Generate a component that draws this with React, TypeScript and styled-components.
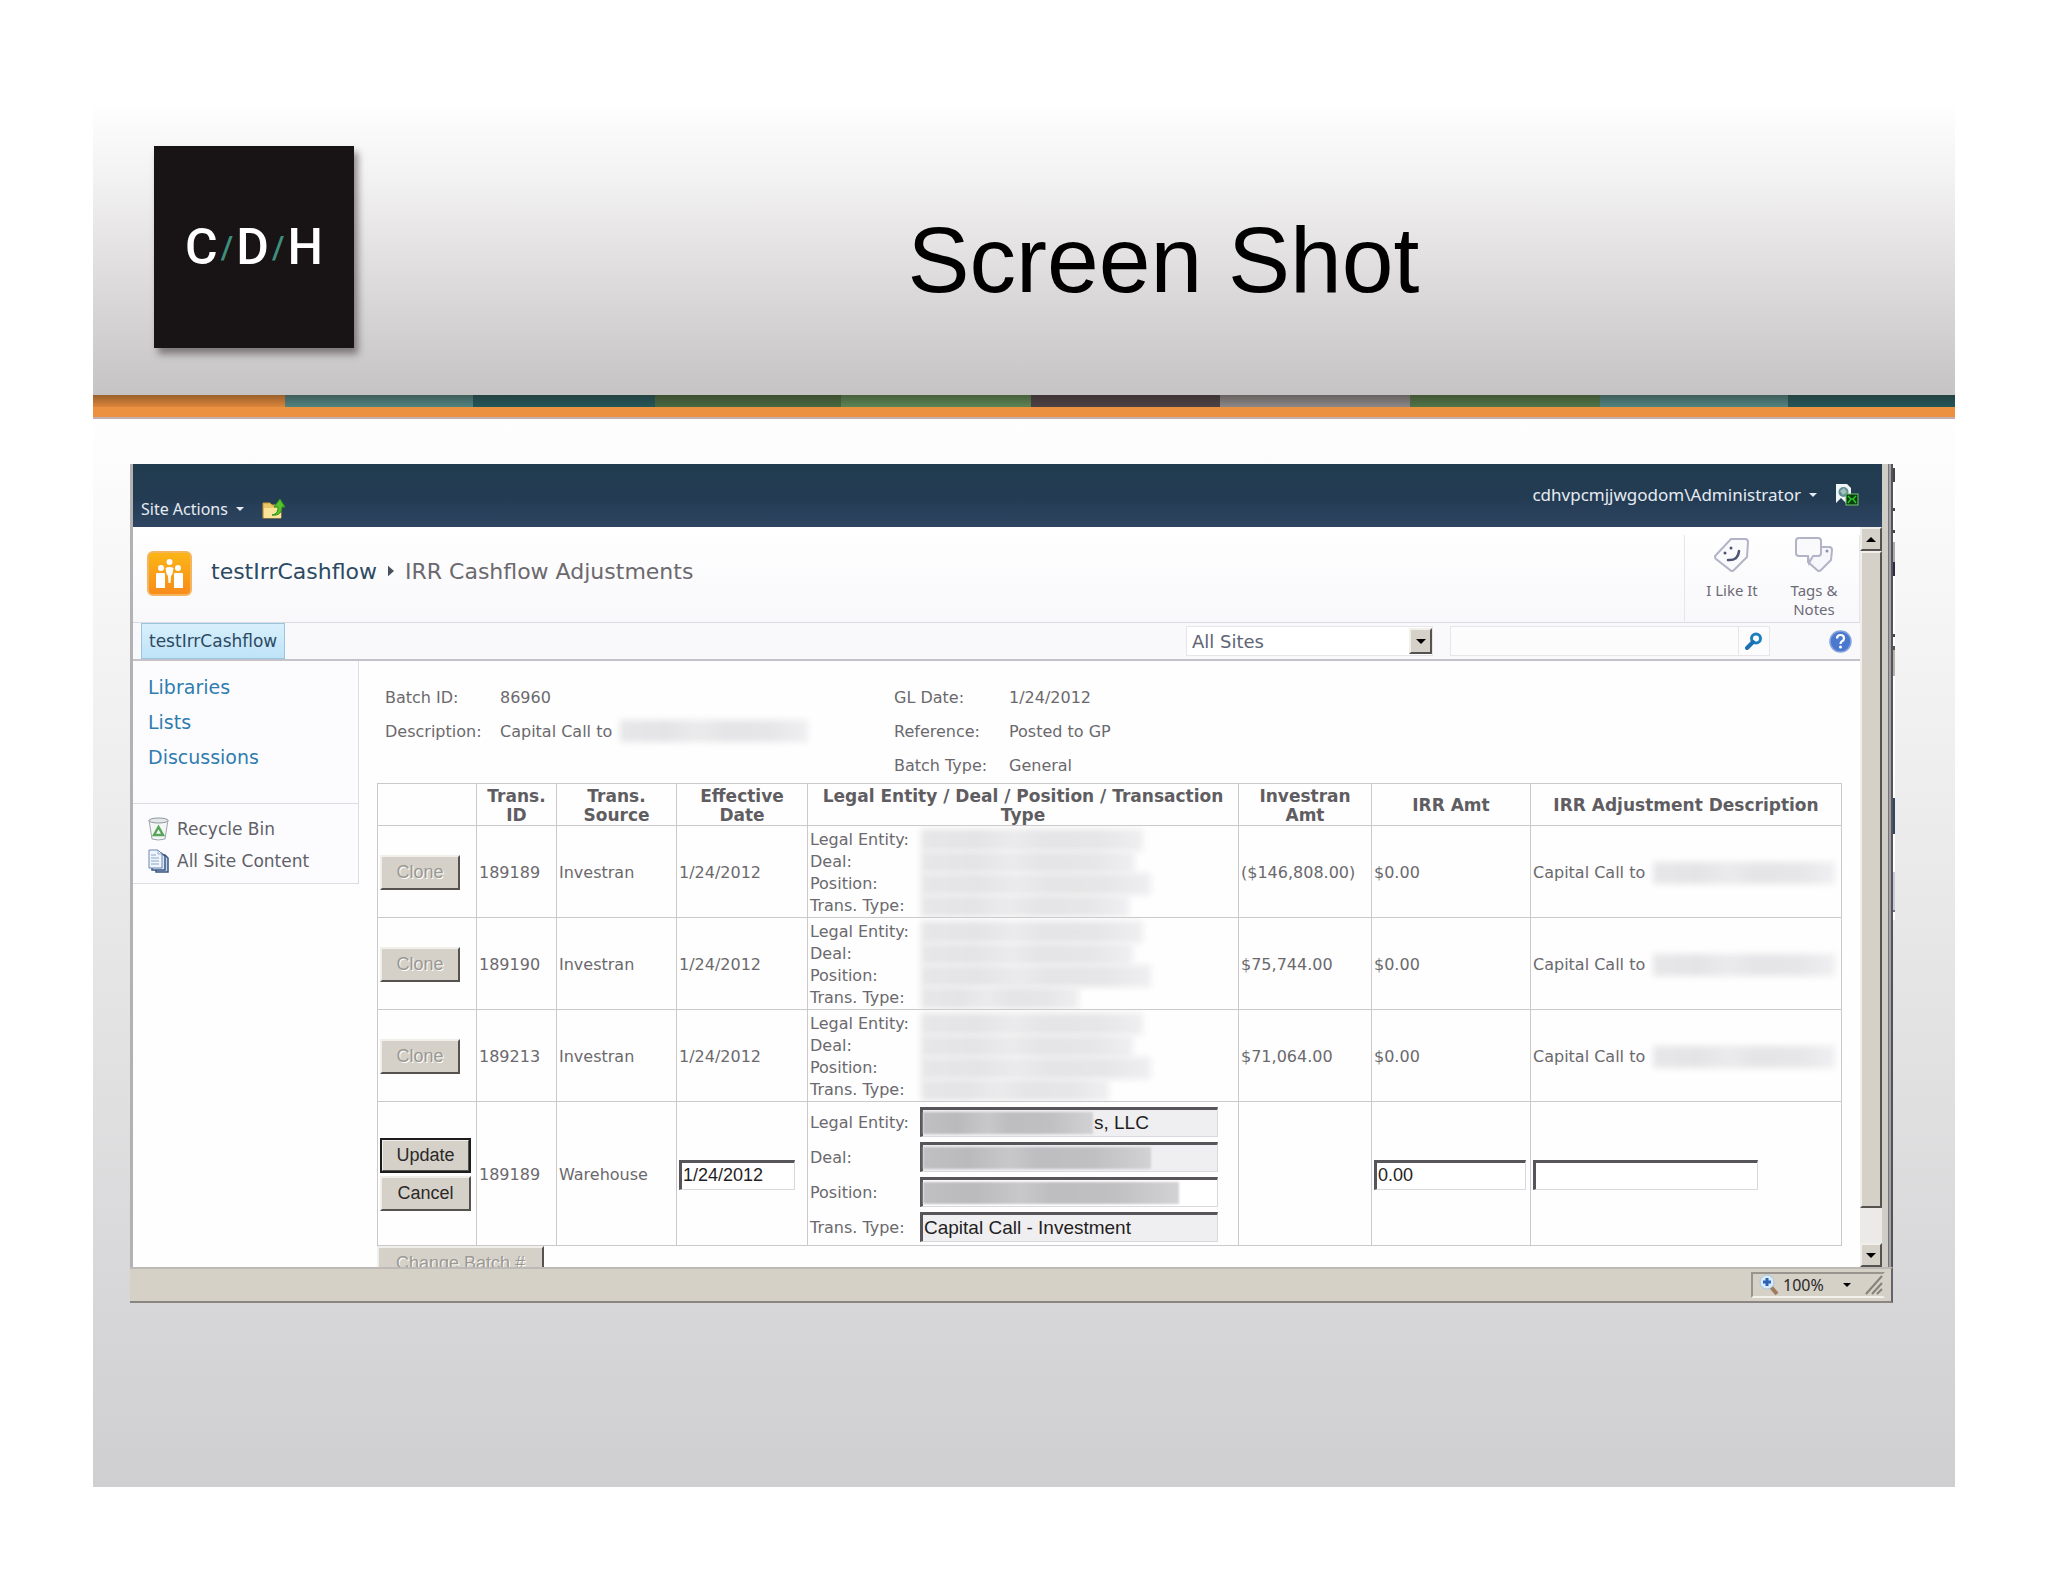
import React from 'react';
import styled, { createGlobalStyle, css } from 'styled-components';

const verdana = `'DejaVu Sans', Verdana, sans-serif`;
const segoe = `'Noto Sans', 'Segoe UI', sans-serif`;
const arial = `'Liberation Sans', Arial, sans-serif`;

const GlobalStyle = createGlobalStyle`
  * { box-sizing: border-box; }
  body { margin: 0; background: #fff; font-family: ${verdana}; color: #6b696d; }
  button, input, select { font: inherit; color: inherit; margin: 0; border-radius: 0; }
  a { text-decoration: none; color: inherit; }
`;

/* ---------- slide ---------- */

const Page = styled.div`
  padding: 100px 93px 95px;
`;

const SlideHeader = styled.header`
  display: flex;
  align-items: center;
  padding: 46px 0 47px 61px;
  background: linear-gradient(#ffffff, #f4f3f4 25%, #e3e1e2 52%, #c5c3c4);
`;

const Logo = styled.div`
  display: flex;
  align-items: center;
  justify-content: center;
  width: 200px;
  height: 202px;
  background: #181314;
  box-shadow: 4px 6px 7px rgba(60, 50, 55, 0.55);
  font: 500 50px Roboto, sans-serif;
  color: #fff;
`;

const Slash = styled.span`
  font-size: 32px;
  color: #3f8f7d;
  padding: 0 3px;
`;

const SlideTitle = styled.h1`
  flex: 1;
  margin: 0;
  padding: 26px 0 0 18px;
  text-align: center;
  font: 93px/104px ${arial};
  color: #000;
`;

const Stripes = styled.div`
  display: grid;
  grid-template-columns: 192fr 188fr 182fr 186fr 190fr 189fr 190fr 190fr 188fr 167fr;
  height: 12px;
`;

const Stripe = styled.span<{ $color: string }>`
  background: linear-gradient(rgba(40, 30, 20, 0.4), rgba(40, 30, 20, 0.05)) ${p => p.$color};
`;

const OrangeRule = styled.div`
  height: 12px;
  background: #ec913f;
  border-bottom: 2px solid #c3afb0;
`;

const SlideBody = styled.main`
  display: flex;
  align-items: flex-start;
  padding: 45px 60px 184px 37px;
  background: linear-gradient(#fefefe, #fafafa 8%, #cfced0);
`;

const BehindWindow = styled.span`
  width: 2px;
  height: 452px;
  margin-top: 4px;
  background: linear-gradient(
    #45434f 0 14px, #fff 14px 40px, #444 40px 43px, #fff 43px 62px, #444 62px 65px,
    #fff 65px 74px, #aaa 74px 94px, #2c2a4a 94px 108px, #fff 108px 166px, #444 166px 169px,
    #fff 169px 178px, #555 178px 182px, #b5b3aa 182px 208px, #fff 208px 330px,
    #2b4868 330px 366px, #fff 366px 404px, #c4ccdc 404px 442px, #777 442px 444px, #fff 444px
  );
`;

/* ---------- browser window ---------- */

const Window = styled.section`
  flex: 1;
  min-width: 0;
`;

const Frame = styled.div`
  border-left: 3px solid #b3b1b4;
  padding-right: 11px;
  background: linear-gradient(to left, #55525a 0 2px, #a5a2a3 2px 4px, #77737a 4px 5px, #d0cdc6 5px 11px, #fff 11px);
`;

const TopBar = styled.div`
  display: flex;
  justify-content: space-between;
  height: 63px;
  padding: 0 23px 0 8px;
  background: linear-gradient(#213b4f, #233c53 55%, #2f4563);
  color: #e6ebf2;
  font-family: ${segoe};
`;

const BarGroup = styled.div<{ $end?: boolean }>`
  display: flex;
  align-items: center;
  align-self: ${p => (p.$end ? 'flex-end' : 'flex-start')};
  height: 24px;
  margin: ${p => (p.$end ? '0 0 6px' : '19px 0 0')};
  gap: 18px;
`;

const MenuButton = styled.button<{ $size: number }>`
  display: flex;
  align-items: center;
  gap: 8px;
  padding: 0;
  border: 0;
  background: none;
  font-size: ${p => p.$size}px;
  line-height: 24px;
`;

const IconButton = styled.button`
  display: flex;
  padding: 0;
  border: 0;
  background: none;
`;

const Pane = styled.div`
  display: flex;
  height: 740px;
  background: #fefefe;
`;

const PaneContent = styled.div`
  flex: 1;
  min-width: 0;
  overflow: hidden;
`;

const TitleRow = styled.div`
  display: flex;
  height: 95px;
  padding-left: 14px;
  background: linear-gradient(#ffffff, #f8f8fb);
`;

const SiteIcon = styled.a`
  display: block;
  margin: 24px 19px 0 0;
`;

const Crumbs = styled.nav`
  display: flex;
  align-items: center;
  flex: 1;
  gap: 11px;
  height: 32px;
  margin-top: 28px;
  font-size: 22px;
  a { color: #2c4a63; }
`;

const Social = styled.div`
  display: flex;
  margin-top: 8px;
  padding: 0 4px 0 6px;
  border-left: 1px solid #e6e5ea;
  border-right: 1px solid #e6e5ea;
`;

const SocialButton = styled.button`
  display: flex;
  flex-direction: column;
  align-items: center;
  gap: 8px;
  width: 82px;
  padding: 2px 10px 0;
  border: 0;
  background: none;
  font: 15px/19px ${segoe};
  color: #6d6b78;
`;

const NavRow = styled.div`
  display: flex;
  align-items: center;
  height: 39px;
  padding: 0 8px;
  background: #f9f9fb;
  border-top: 1px solid #dcdbe0;
  border-bottom: 2px solid #c4c3c9;
`;

const Tab = styled.a`
  padding: 0 7px;
  border: 1px solid #9cc6de;
  background: linear-gradient(#d8f0fc, #bfe3f8);
  font-size: 17px;
  line-height: 34px;
  color: #2c4a63;
`;

const ScopeBox = styled.div`
  display: flex;
  width: 247px;
  height: 30px;
  margin-left: auto;
  background: #fff;
  border: 1px solid #e6e5ea;
  padding: 1px 0;
`;

const ScopeSelect = styled.select`
  appearance: none;
  flex: 1;
  min-width: 0;
  padding: 0 5px;
  border: 0;
  background: none;
  font-size: 18px;
  color: #5e6474;
`;

const classicEdge = css`
  border: 2px solid;
  border-color: #f1efea #55524f #55524f #f1efea;
  background: #d5d1c8;
`;

const SquareButton = styled.button`
  ${classicEdge}
  display: flex;
  align-items: center;
  justify-content: center;
  width: 22px;
  height: 24px;
  padding: 0;
`;

const ScopeArrow = styled.span`
  ${classicEdge}
  display: flex;
  align-items: center;
  justify-content: center;
  width: 23px;
  pointer-events: none;
`;

const SearchBox = styled.form`
  display: flex;
  width: 320px;
  height: 30px;
  margin: 0 59px 0 17px;
  border: 1px solid #e6e5ea;
  background: #fcfcfd;
`;

const SearchInput = styled.input`
  flex: 1;
  min-width: 0;
  border: 0;
  background: none;
`;

const SearchButton = styled.button`
  display: flex;
  align-items: center;
  justify-content: center;
  width: 31px;
  padding: 0;
  border: 0;
  border-left: 1px solid #e6e5ea;
  background: none;
`;

const Columns = styled.div`
  display: flex;
  align-items: flex-start;
`;

const Sidebar = styled.aside`
  flex: none;
  width: 226px;
  background: #fcfcfe;
  border: solid #dddce2;
  border-width: 0 1px 1px 0;
`;

const LinkList = styled.nav`
  display: flex;
  flex-direction: column;
  padding: 9px 15px 28px;
  font-size: 19px;
  line-height: 35px;
  color: #2f7cb0;
`;

const ToolList = styled.nav`
  display: flex;
  flex-direction: column;
  padding: 9px 15px 6px;
  border-top: 1px solid #dddce2;
  font-size: 17px;
  line-height: 32px;
  color: #5f6068;
  a { display: flex; align-items: center; gap: 8px; }
`;

const Content = styled.div`
  flex: 1;
  min-width: 0;
  padding: 19px 18px 0 18px;
  font-size: 16px;
`;

const Meta = styled.dl`
  display: grid;
  grid-template-columns: 115px 394px 115px 1fr;
  grid-auto-rows: 34px;
  align-items: center;
  margin: 0;
  padding: 0 0 1px 8px;
  dt, dd { margin: 0; display: flex; align-items: center; white-space: nowrap; }
`;

const Smudge = styled.span<{ $w: number; $dark?: boolean }>`
  flex: none;
  width: ${p => p.$w}px;
  height: 22px;
  background: ${p =>
    p.$dark
      ? 'linear-gradient(90deg, #c0c0c2, #bababc 20%, #c8c8ca 38%, #bebec0 50%, #c0c0c2 75%, #d2d2d4)'
      : 'linear-gradient(90deg, #e7e6e8, #e4e3e5 25%, #ebeaec 42%, #e5e4e6 55%, #e6e5e7 80%, #efeef0)'};
  filter: blur(${p => (p.$dark ? 1 : 3)}px);
`;

/* ---------- transactions table ---------- */

const Grid = styled.table`
  width: 100%;
  table-layout: fixed;
  border-collapse: collapse;
  border: 1px solid #c9c7ca;
  border-right-color: #8d8b8f;
  border-bottom-color: #8d8b8f;
  th, td { border: 1px solid #cbc9cc; padding: 2px 2px 0; }
  th { height: 42px; font-size: 17px; line-height: 19px; color: #5f5d61; }
  td { height: 92px; white-space: nowrap; overflow: hidden; }
`;

const Col = styled.col<{ $w?: number }>`
  width: ${p => (p.$w ? p.$w + 'px' : 'auto')};
`;

const EditRow = styled.tr`
  && td { height: 144px; }
`;

const Inline = styled.span`
  display: flex;
  align-items: center;
  gap: 8px;
`;

const Entity = styled.span`
  display: grid;
  grid-template-columns: 111px 1fr;
  grid-auto-rows: 22px;
  line-height: 22px;
`;

const EntityForm = styled.div`
  display: grid;
  grid-template-columns: 110px 298px;
  grid-auto-rows: 30px;
  gap: 5px 0;
  align-items: center;
`;

const sunken = css`
  height: 30px;
  border: 2px solid;
  border-width: 3px 1px 1px 3px;
  border-color: #58555a #d9d8dc #d9d8dc #58555a;
`;

const Field = styled.span<{ $grey?: boolean }>`
  ${sunken}
  display: flex;
  align-items: center;
  background: ${p => (p.$grey ? '#efeef0' : '#fff')};
`;

const FieldInput = styled.input`
  flex: 1;
  min-width: 0;
  padding: 0 1px;
  border: 0;
  background: none;
  font: 19px ${arial};
  color: #1f1e22;
`;

const TextInput = styled.input<{ $w: number }>`
  ${sunken}
  display: block;
  width: ${p => p.$w}px;
  padding: 0 1px;
  background: #fff;
  font: 18px ${arial};
  color: #1f1e22;
`;

const PushButton = styled.button<{ $w: number; $primary?: boolean }>`
  ${classicEdge}
  display: block;
  width: ${p => p.$w}px;
  height: 35px;
  padding: 0;
  font: 18px ${arial};
  color: #2a2829;
  ${p => p.$primary && css`outline: 2px solid #1c1b1d; outline-offset: -2px; border-width: 3px;`}
  &:disabled { color: #9b9892; text-shadow: 1px 1px 0 #fff; }
`;

const Stack = styled.div`
  display: flex;
  flex-direction: column;
  gap: 3px;
`;

/* ---------- scroll bar and status bar ---------- */

const ScrollBar = styled.div`
  display: flex;
  flex-direction: column;
  width: 22px;
  background: #eceae8;
`;

const Thumb = styled.div`
  ${classicEdge}
  flex: 1;
  margin-bottom: 35px;
`;

const StatusBar = styled.footer`
  display: flex;
  justify-content: flex-end;
  height: 36px;
  padding: 3px 6px 3px 0;
  background: #d5d1c6;
  border-top: 2px solid #bcb9b7;
  border-right: 2px solid #66636a;
  border-bottom: 2px solid #8b8681;
`;

const ZoomPanel = styled.button`
  display: flex;
  align-items: center;
  width: 134px;
  padding: 0 0 0 6px;
  border: 2px solid;
  border-color: #99958e #d5d1c6 #f3f1ec #99958e;
  background: none;
  font: 16px ${segoe};
  color: #2a2829;
`;

const ZoomLabel = styled.span`
  flex: 1;
  padding-left: 4px;
  text-align: left;
`;

const GripCell = styled.span`
  display: flex;
  padding-left: 14px;
`;

/* ---------- icons ---------- */

const Arrow = ({ color = '#000', size = 10, up = false }: { color?: string; size?: number; up?: boolean }) => (
  <svg width={size} height={size / 2} viewBox="0 0 10 5">
    <path d={up ? 'M0 5L5 0L10 5z' : 'M0 0H10L5 5z'} fill={color} />
  </svg>
);

const FolderUp = () => (
  <svg width="24" height="22" viewBox="0 0 24 22">
    <path d="M1 5h7l2 2h9v13H1z" fill="#e9c567" stroke="#c79c3b" />
    <path d="M2 20V10h17v10z" fill="#fbe49a" />
    <path d="M10 17c5-1 6-4 6-8h-4l6-8 5 8h-3c0 5-3 9-10 8z" fill="#57c22d" stroke="#2e8e1b" />
  </svg>
);

const ServerPage = () => (
  <svg width="24" height="24" viewBox="0 0 24 24">
    <path d="M1 1h11l4 4v15h-5l-5-5-5 5z" fill="#f0f5f6" />
    <circle cx="8.500" cy="9" r="5" fill="#5f8c95" />
    <path d="M5 8l4-3 3 4-4 3z" fill="#a3c2bd" />
    <rect x="11" y="11" width="12" height="11" fill="#0b3d10" stroke="#72c46a" />
    <path d="M13 13l3 3-3 4M21 13l-3 3 3 4M16 16h2" stroke="#2fc22c" strokeWidth="1.500" fill="none" />
  </svg>
);

const TeamIcon = () => (
  <svg width="45" height="46" viewBox="0 0 45 46">
    <defs>
      <linearGradient id="team" x1="0" y1="0" x2="0" y2="1">
        <stop offset="0" stopColor="#fbb615" />
        <stop offset="1" stopColor="#f88a1c" />
      </linearGradient>
    </defs>
    <rect x="1" y="1" width="43" height="43" rx="5" fill="url(#team)" stroke="#f3b560" strokeWidth="2" />
    <g fill="#fff">
      <circle cx="14" cy="17" r="3" />
      <circle cx="31" cy="17" r="3" />
      <circle cx="22.500" cy="11" r="3" />
      <path d="M9 23q0-1 1-1h7q1 0 1 1v14H9zM27 23q0-1 1-1h7q1 0 1 1v14h-9z" />
      <path d="M18.500 17q4-2 8 0l-1 6-1.500 2-.5 7h-2l-.5-7-1.500-2z" />
    </g>
  </svg>
);

const LikeTag = () => (
  <svg width="36" height="36" viewBox="0 0 36 36">
    <path d="M17 2h14q3 0 3 3l-1 15L20 33q-2 2-4 0L2 22q-2-2 0-4z" fill="#fafafd" stroke="#b2b3c6" strokeWidth="2" />
    <circle cx="11" cy="16" r="1.500" fill="#4f5372" />
    <circle cx="17" cy="11" r="1.500" fill="#4f5372" />
    <path d="M14 23q10 1 11-9" fill="none" stroke="#4f5372" strokeWidth="2.500" strokeLinecap="round" />
  </svg>
);

const TagsIcon = () => (
  <svg width="38" height="36" viewBox="0 0 38 36">
    <path d="M24 10h10q3 0 3 3l-1 10-10 10q-2 2-4 0l-9-8V19z" fill="#f6f6fb" stroke="#b2b3c6" strokeWidth="2" />
    <circle cx="32" cy="14" r="1.500" fill="#8d90a8" />
    <path d="M4 1h19q3 0 3 3v12q0 3-3 3h-5l-4 7-1-7H4q-3 0-3-3V4q0-3 3-3z" fill="#fafafd" stroke="#b2b3c6" strokeWidth="2" />
  </svg>
);

const SearchIcon = () => (
  <svg width="18" height="18" viewBox="0 0 18 18">
    <circle cx="11" cy="6.500" r="4.500" fill="#fff" stroke="#1c7fc0" strokeWidth="3" />
    <path d="M8 10L2 16" stroke="#1c6fb0" strokeWidth="4" strokeLinecap="round" />
  </svg>
);

const HelpIcon = () => (
  <svg width="23" height="23" viewBox="0 0 23 23">
    <circle cx="11.500" cy="11.500" r="10.500" fill="#4a78cf" stroke="#87a3dc" strokeWidth="1.500" />
    <path d="M8 8.500q0-3.500 3.500-3.500T15 8.200q0 2-2 3.100-1.500.9-1.500 2.700" fill="none" stroke="#fff" strokeWidth="2.200" />
    <circle cx="11.500" cy="17" r="1.500" fill="#fff" />
  </svg>
);

const BinIcon = () => (
  <svg width="21" height="24" viewBox="0 0 21 24">
    <path d="M1 3l3 19q6 2 13 0l3-19z" fill="#f4f6f6" stroke="#9ea5a8" />
    <ellipse cx="10.500" cy="3.500" rx="9.500" ry="2.500" fill="#e4e8e9" stroke="#8f969a" />
    <path d="M6 18l4.500-8 4.500 8z" fill="none" stroke="#58a45a" strokeWidth="2.500" />
  </svg>
);

const PagesIcon = () => (
  <svg width="21" height="24" viewBox="0 0 21 24">
    <path d="M8 6h9l3 3v14H8z" fill="#c6d6ec" stroke="#3b5780" strokeWidth="1.500" />
    <path d="M4 4h9l4 3v14H4z" fill="#dbe6f5" stroke="#3b5780" strokeWidth="1.500" />
    <path d="M1 1h9l4 4v14H1z" fill="#f0f5fc" stroke="#6a88b5" />
    <path d="M10 1v4h4M3 6h5M3 9h8M3 12h8M3 15h8" stroke="#8ca6cc" fill="none" />
  </svg>
);

const ZoomIcon = () => (
  <svg width="20" height="22" viewBox="0 0 20 22">
    <path d="M12 13l6 7" stroke="#a07a5e" strokeWidth="4" />
    <circle cx="8" cy="8" r="7" fill="#d9ecf8" stroke="#a9c7dc" />
    <path d="M8 4v8M4 8h8" stroke="#2a63b8" strokeWidth="3" />
  </svg>
);

const Grip = () => (
  <svg width="18" height="20" viewBox="0 0 18 20">
    <path d="M1 19L17 1M7 19L17 8M12 19L17 14" stroke="#85817b" strokeWidth="2" />
  </svg>
);

/* ---------- data ---------- */

const stripeColors = ['#e58b3c', '#528888', '#235a5f', '#4a6d43', '#5e8a58', '#4e4348', '#918d90', '#537a4b', '#528888', '#235a5f'];

const headings = ['', 'Trans. ID', 'Trans. Source', 'Effective Date', 'Legal Entity / Deal / Position / Transaction Type', 'Investran Amt', 'IRR Amt', 'IRR Adjustment Description'];

const entityLabels = ['Legal Entity:', 'Deal:', 'Position:', 'Trans. Type:'];

const rows = [
  { id: '189189', amount: '($146,808.00)', smudges: [222, 214, 230, 208] },
  { id: '189190', amount: '$75,744.00', smudges: [222, 212, 230, 158] },
  { id: '189213', amount: '$71,064.00', smudges: [222, 212, 230, 188] },
];

export default function App() {
  return (
    <>
      <GlobalStyle />
      <Page>
        <SlideHeader>
          <Logo>C<Slash>/</Slash>D<Slash>/</Slash>H</Logo>
          <SlideTitle>Screen Shot</SlideTitle>
        </SlideHeader>
        <Stripes>{stripeColors.map((c, i) => <Stripe key={i} $color={c} />)}</Stripes>
        <OrangeRule />
        <SlideBody>
          <Window>
            <Frame>
              <TopBar>
                <BarGroup $end>
                  <MenuButton $size={16}>Site Actions <Arrow color="#e6ebf2" size={8} /></MenuButton>
                  <IconButton aria-label="Navigate up"><FolderUp /></IconButton>
                </BarGroup>
                <BarGroup>
                  <MenuButton $size={17}>cdhvpcmjjwgodom\Administrator <Arrow color="#e6ebf2" size={8} /></MenuButton>
                  <IconButton aria-label="Page status"><ServerPage /></IconButton>
                </BarGroup>
              </TopBar>
              <Pane>
                <PaneContent>
                  <TitleRow>
                    <SiteIcon href="#" aria-label="Site home"><TeamIcon /></SiteIcon>
                    <Crumbs>
                      <a href="#">testIrrCashflow</a>
                      <svg width="6" height="12" viewBox="0 0 7 12"><path d="M0 0L7 6L0 12z" fill="#47505c" /></svg>
                      <span>IRR Cashflow Adjustments</span>
                    </Crumbs>
                    <Social>
                      <SocialButton><LikeTag />I Like It</SocialButton>
                      <SocialButton><TagsIcon />Tags &amp; Notes</SocialButton>
                    </Social>
                  </TitleRow>
                  <NavRow>
                    <Tab href="#">testIrrCashflow</Tab>
                    <ScopeBox>
                      <ScopeSelect aria-label="Search scope"><option>All Sites</option></ScopeSelect>
                      <ScopeArrow><Arrow /></ScopeArrow>
                    </ScopeBox>
                    <SearchBox>
                      <SearchInput aria-label="Search" />
                      <SearchButton type="button" aria-label="Go"><SearchIcon /></SearchButton>
                    </SearchBox>
                    <IconButton aria-label="Help"><HelpIcon /></IconButton>
                  </NavRow>
                  <Columns>
                    <Sidebar>
                      <LinkList>
                        <a href="#">Libraries</a>
                        <a href="#">Lists</a>
                        <a href="#">Discussions</a>
                      </LinkList>
                      <ToolList>
                        <a href="#"><BinIcon />Recycle Bin</a>
                        <a href="#"><PagesIcon />All Site Content</a>
                      </ToolList>
                    </Sidebar>
                    <Content>
                      <Meta>
                        <dt>Batch ID:</dt><dd>86960</dd>
                        <dt>GL Date:</dt><dd>1/24/2012</dd>
                        <dt>Description:</dt><dd><Inline>Capital Call to <Smudge $w={188} /></Inline></dd>
                        <dt>Reference:</dt><dd>Posted to GP</dd>
                        <dt /><dd />
                        <dt>Batch Type:</dt><dd>General</dd>
                      </Meta>
                      <Grid>
                        <colgroup>
                          <Col $w={99} /><Col $w={80} /><Col $w={120} /><Col $w={131} />
                          <Col $w={431} /><Col $w={133} /><Col $w={159} /><Col />
                        </colgroup>
                        <thead>
                          <tr>{headings.map(h => <th key={h} scope="col">{h}</th>)}</tr>
                        </thead>
                        <tbody>
                          {rows.map(r => (
                            <tr key={r.id}>
                              <td><PushButton $w={80} disabled>Clone</PushButton></td>
                              <td>{r.id}</td>
                              <td>Investran</td>
                              <td>1/24/2012</td>
                              <td>
                                <Entity>
                                  {entityLabels.map((l, i) => (
                                    <React.Fragment key={l}><span>{l}</span><Smudge $w={r.smudges[i]} /></React.Fragment>
                                  ))}
                                </Entity>
                              </td>
                              <td>{r.amount}</td>
                              <td>$0.00</td>
                              <td><Inline>Capital Call to <Smudge $w={182} /></Inline></td>
                            </tr>
                          ))}
                          <EditRow>
                            <td>
                              <Stack>
                                <PushButton $w={91} $primary>Update</PushButton>
                                <PushButton $w={91}>Cancel</PushButton>
                              </Stack>
                            </td>
                            <td>189189</td>
                            <td>Warehouse</td>
                            <td><TextInput $w={116} aria-label="Effective Date" defaultValue="1/24/2012" /></td>
                            <td>
                              <EntityForm>
                                <label htmlFor="entity">Legal Entity:</label>
                                <Field $grey><Smudge $w={170} $dark /><FieldInput id="entity" defaultValue="s, LLC" /></Field>
                                <label htmlFor="deal">Deal:</label>
                                <Field $grey><Smudge $w={228} $dark /><FieldInput id="deal" /></Field>
                                <label htmlFor="position">Position:</label>
                                <Field><Smudge $w={256} $dark /><FieldInput id="position" /></Field>
                                <label htmlFor="type">Trans. Type:</label>
                                <Field $grey><FieldInput id="type" defaultValue="Capital Call - Investment" /></Field>
                              </EntityForm>
                            </td>
                            <td />
                            <td><TextInput $w={152} aria-label="IRR Amt" defaultValue="0.00" /></td>
                            <td><TextInput $w={225} aria-label="IRR Adjustment Description" /></td>
                          </EditRow>
                        </tbody>
                      </Grid>
                      <PushButton $w={167} disabled>Change Batch #</PushButton>
                    </Content>
                  </Columns>
                </PaneContent>
                <ScrollBar>
                  <SquareButton aria-label="Scroll up"><Arrow up /></SquareButton>
                  <Thumb />
                  <SquareButton aria-label="Scroll down"><Arrow /></SquareButton>
                </ScrollBar>
              </Pane>
            </Frame>
            <StatusBar>
              <ZoomPanel>
                <ZoomIcon />
                <ZoomLabel>100%</ZoomLabel>
                <Arrow size={8} />
                <GripCell><Grip /></GripCell>
              </ZoomPanel>
            </StatusBar>
          </Window>
          <BehindWindow />
        </SlideBody>
      </Page>
    </>
  );
}
